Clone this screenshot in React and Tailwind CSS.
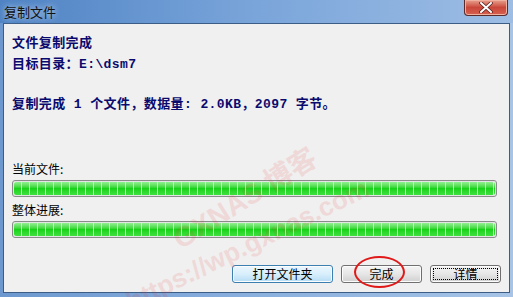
import React from 'react';

const segs = Array.from({ length: 61 });

const ProgressBar = () => (
  <div className="mx-[12px] h-[17px] rounded-[3px] border border-[#8a8a8a] bg-white p-[1px] shadow-[inset_0_0_0_1px_#e4e4e4]">
    <div className="flex h-full gap-[1px] overflow-hidden rounded-[2px] bg-[#d8efd8]">
      {segs.map((_, i) => (
        <div
          key={i}
          className="h-full w-[7px] shrink-0 bg-gradient-to-b from-[#8ff08f] via-[#17d317] to-[#3ee03e]"
        />
      ))}
    </div>
  </div>
);

const WinButton = ({ children, className = '', variant = 'normal' }) => {
  const styles = {
    normal: 'border-[#707070] bg-gradient-to-b from-[#f4f4f4] via-[#e6e6e6] to-[#d0d0d0]',
    hover: 'border-[#3c7fb1] bg-gradient-to-b from-[#eaf6fd] via-[#d9effc] to-[#b5dcf5]',
    focus: 'border-[#707070] bg-gradient-to-b from-[#f4f4f4] via-[#e6e6e6] to-[#d0d0d0]',
  };
  return (
    <button
      className={`relative flex h-[18px] items-center justify-center rounded-[3px] border text-[12px] leading-none text-black shadow-[inset_0_0_0_1px_#fcfcfc] ${styles[variant]} ${className}`}
    >
      {variant === 'focus' && (
        <span className="absolute inset-[2px] border border-dotted border-black" />
      )}
      <span className="relative">{children}</span>
    </button>
  );
};

export default function App() {
  return (
    <div
      className="relative h-[297px] w-[513px] overflow-hidden bg-gradient-to-r from-[#6c98cf] via-[#8ab0de] to-[#a7c4e6]"
      style={{ fontFamily: '"Noto Sans CJK SC", "Liberation Sans", sans-serif' }}
    >
      {/* Title bar */}
      <div className="flex h-[23px] items-center justify-between bg-gradient-to-r from-[#4f83c4] via-[#7aa5da] to-[#9dbde4] pl-[4px]">
        <span className="text-[13px] leading-none text-[#111] [text-shadow:0_0_6px_#dce8f6]">复制文件</span>
        <div className="mr-[5px] flex h-[16px] w-[44px] items-center justify-center self-start rounded-b-[4px] border border-t-0 border-[#5b2a2a] bg-gradient-to-b from-[#e7a08f] via-[#c9473a] to-[#d6614f] shadow-[inset_0_0_0_1px_#f0b0a0]">
          <svg width="14" height="11" viewBox="0 0 14 11">
            <path d="M2 1 L12 10 M12 1 L2 10" stroke="#5a2020" strokeWidth="3.5" strokeLinecap="round" />
            <path d="M2 1 L12 10 M12 1 L2 10" stroke="#ffffff" strokeWidth="2" strokeLinecap="round" />
          </svg>
        </div>
      </div>

      {/* Client area */}
      <div className="mx-[3px] h-[270px] border border-[#3b5d86] bg-[#f0f0f0]">
        <div
          className="pl-[8px] pt-[10px] text-[13px] font-bold leading-[20px] tracking-[0.4px] text-[#0a0a6e]"
          style={{ fontFamily: '"Liberation Mono", "Noto Sans CJK SC", monospace' }}
        >
          <div>文件复制完成</div>
          <div className="mt-[1px]">目标目录：E:\dsm7</div>
          <div className="mt-[20px]">复制完成 1 个文件，数据量: 2.0KB，2097 字节。</div>
        </div>

        <div className="mt-[46px] pl-[8px] text-[12px] leading-[16px] text-black">当前文件:</div>
        <div className="-ml-[4px] mt-[3px]">
          <ProgressBar />
        </div>
        <div className="mt-[5px] pl-[8px] text-[12px] leading-[16px] text-black">整体进展:</div>
        <div className="-ml-[4px] mt-[3px]">
          <ProgressBar />
        </div>

        <div className="mt-[27px] flex justify-end gap-[8px] pr-[8px]">
          <WinButton variant="hover" className="w-[101px]">打开文件夹</WinButton>
          <div className="relative">
            <WinButton className="w-[81px]">完成</WinButton>
            <span className="pointer-events-none absolute left-[13px] top-[-9px] h-[32px] w-[51px] rounded-[50%] border-2 border-[#e01818]" />
          </div>
          <WinButton variant="focus" className="w-[71px]">详情</WinButton>
        </div>
      </div>

      {/* Watermark */}
      <div
        className="pointer-events-none absolute left-[176px] top-[228px] origin-left -rotate-[32deg] text-[28px] font-bold leading-none text-[#e83030] opacity-[0.12]"
        style={{ fontFamily: '"Liberation Sans", "Noto Sans CJK SC", sans-serif' }}
      >
        GXNAS 博客
      </div>
      <div
        className="pointer-events-none absolute left-[128px] top-[290px] origin-left -rotate-[26deg] text-[26px] font-bold leading-none text-[#e83030] opacity-[0.12]"
        style={{ fontFamily: '"Liberation Sans", sans-serif' }}
      >
        https://wp.gxnas.com
      </div>
    </div>
  );
}
